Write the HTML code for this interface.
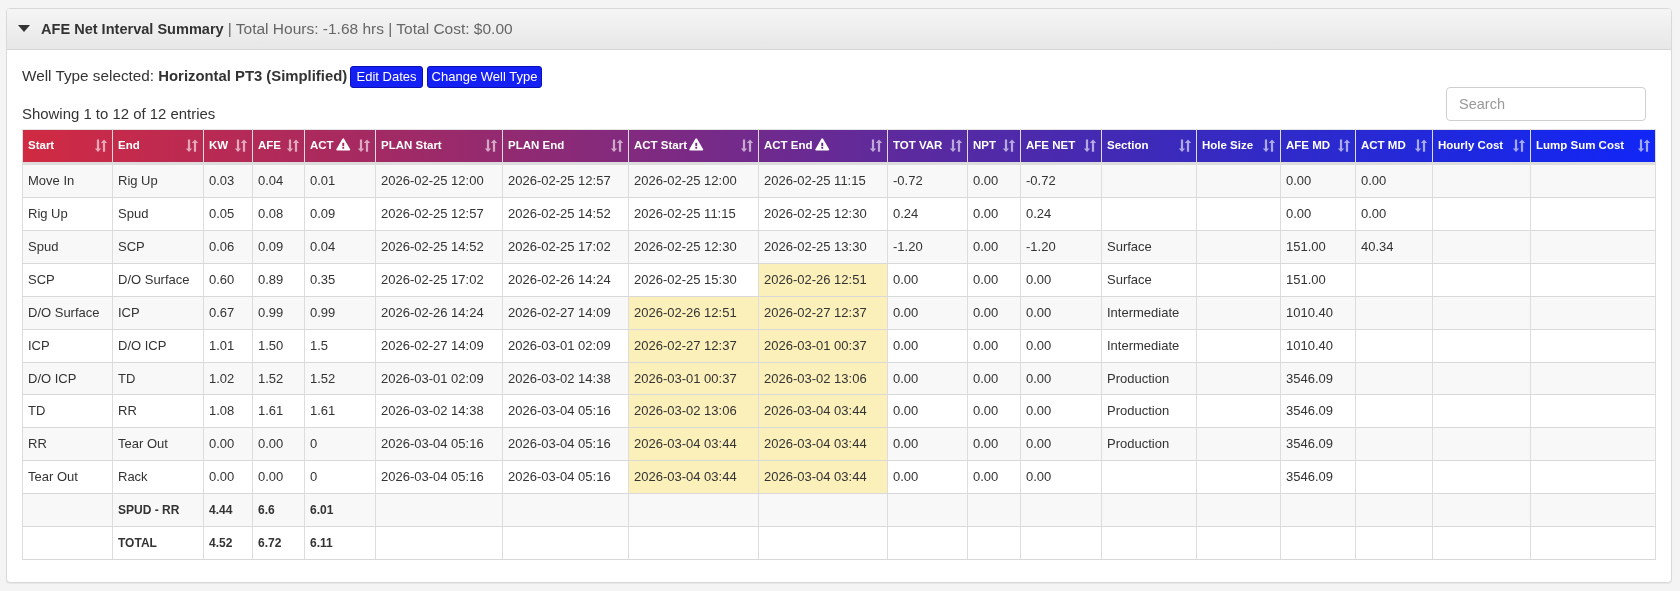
<!DOCTYPE html><html><head><meta charset="utf-8"><title>AFE Net Interval Summary</title><style>
*{box-sizing:border-box;margin:0;padding:0}
html,body{width:1680px;height:591px;overflow:hidden;background:#f4f4f4;-webkit-font-smoothing:antialiased;font-family:"Liberation Sans",sans-serif;color:#333}
.panel{will-change:transform;position:absolute;left:6px;top:8px;width:1666px;height:575px;background:#fff;border:1px solid #d9d9d9;border-radius:4px;box-shadow:0 1px 1px rgba(0,0,0,.06)}
.ph{position:absolute;left:0;top:0;width:1664px;height:41px;border-bottom:1px solid #d6d6d6;border-radius:3px 3px 0 0;background:linear-gradient(to bottom,#f5f5f5 0,#e7e7e7 100%)}
.caret{position:absolute;left:10.8px;top:16.3px;width:0;height:0;border-left:6.5px solid transparent;border-right:6.5px solid transparent;border-top:7.2px solid #333}
.title{position:absolute;left:34px;top:11px;white-space:nowrap;font-size:14.55px;line-height:18px}
.title b{color:#333}
.title span{color:#666;font-size:15.5px}
.wt{position:absolute;left:15px;top:57px;white-space:nowrap;font-size:15.3px;line-height:20px;color:#333}
.wt b{font-size:14.85px}
.btn{position:absolute;top:57px;height:22px;background:#1520f5;border:1px solid #0a10b4;border-radius:3px;color:#fff;font-size:13px;line-height:20px;text-align:center;white-space:nowrap}
.show{position:absolute;left:15px;top:94.5px;font-size:14.93px;line-height:20px;white-space:nowrap}
.search{position:absolute;left:1439px;top:78px;width:200px;height:34px;border:1px solid #cfcfcf;border-radius:4px;background:#fff}
.search span{position:absolute;left:12px;top:7px;font-size:14.5px;line-height:18px;color:#999}
.tbl{position:absolute;left:15px;top:120px;width:1634px;border-left:1px solid #ddd;border-top:1px solid #e4e4e4}
.hr{display:flex;height:35px;border-bottom:3px solid #ddd;background:linear-gradient(to right,#d12a42 0px,#cb2a47 48px,#aa2a5e 303px,#8a2a78 548px,#5c2a9e 883px,#3c2aba 1138px,#2e2acc 1283px,#1e28df 1443px,#1226f5 1618px,#1126f7 1633px)}
.th{position:relative;height:32px;border-right:1px solid #ddd;color:#fff;font-weight:bold;font-size:11.5px;line-height:30px;padding-left:5px;white-space:nowrap}
.th .si{position:absolute;right:5px;top:9px;fill:rgba(255,255,255,.6);overflow:visible}
.th .wi{vertical-align:-2px;margin-left:2px}
.r{display:flex;height:33px;border-bottom:1px solid #d9d9d9}
.r.o{background:#f8f8f8}
.r.s{height:32px}.r.s .td{height:31px;line-height:31px}
.td{height:32px;border-right:1px solid #ddd;font-size:13px;line-height:32px;padding-left:5px;white-space:nowrap;overflow:hidden}
.td.y{background:#fbf0ba}
.td.b{font-weight:bold;font-size:12px}
</style></head><body>
<div class="panel">
<div class="ph"><div class="caret"></div><div class="title"><b>AFE Net Interval Summary</b> <span>| Total Hours: -1.68 hrs | Total Cost: $0.00</span></div></div>
<div class="wt">Well Type selected: <b>Horizontal PT3 (Simplified)</b></div>
<div class="btn" style="left:343px;width:73px">Edit Dates</div>
<div class="btn" style="left:420px;width:115px">Change Well Type</div>
<div class="show">Showing 1 to 12 of 12 entries</div>
<div class="search"><span>Search</span></div>
<div class="tbl">
<div class="hr"><div class="th" style="width:90px">Start<svg class="si" width="12" height="13" viewBox="0 0 12 13"><path d="M1.9 0.6H4.1V9.5H6.2L3 13L-0.2 9.5H1.9z"/><path d="M7.9 12.8H10.1V4H12.2L9 0.5L5.8 4H7.9z"/></svg></div><div class="th" style="width:91px">End<svg class="si" width="12" height="13" viewBox="0 0 12 13"><path d="M1.9 0.6H4.1V9.5H6.2L3 13L-0.2 9.5H1.9z"/><path d="M7.9 12.8H10.1V4H12.2L9 0.5L5.8 4H7.9z"/></svg></div><div class="th" style="width:49px">KW<svg class="si" width="12" height="13" viewBox="0 0 12 13"><path d="M1.9 0.6H4.1V9.5H6.2L3 13L-0.2 9.5H1.9z"/><path d="M7.9 12.8H10.1V4H12.2L9 0.5L5.8 4H7.9z"/></svg></div><div class="th" style="width:52px">AFE<svg class="si" width="12" height="13" viewBox="0 0 12 13"><path d="M1.9 0.6H4.1V9.5H6.2L3 13L-0.2 9.5H1.9z"/><path d="M7.9 12.8H10.1V4H12.2L9 0.5L5.8 4H7.9z"/></svg></div><div class="th" style="width:71px">ACT<svg class="wi" width="15" height="13" viewBox="0 0 15 13"><path fill-rule="evenodd" fill="#fff" d="M6.3 0.9Q7.25 -0.6 8.2 0.9L14 11Q14.8 12.5 13.2 12.5L1.3 12.5Q-0.3 12.5 0.5 11Z M6.3 4.7H8.2V8H6.3z M6.3 8.7H8.2V10.7H6.3z"/></svg><svg class="si" width="12" height="13" viewBox="0 0 12 13"><path d="M1.9 0.6H4.1V9.5H6.2L3 13L-0.2 9.5H1.9z"/><path d="M7.9 12.8H10.1V4H12.2L9 0.5L5.8 4H7.9z"/></svg></div><div class="th" style="width:127px">PLAN Start<svg class="si" width="12" height="13" viewBox="0 0 12 13"><path d="M1.9 0.6H4.1V9.5H6.2L3 13L-0.2 9.5H1.9z"/><path d="M7.9 12.8H10.1V4H12.2L9 0.5L5.8 4H7.9z"/></svg></div><div class="th" style="width:126px">PLAN End<svg class="si" width="12" height="13" viewBox="0 0 12 13"><path d="M1.9 0.6H4.1V9.5H6.2L3 13L-0.2 9.5H1.9z"/><path d="M7.9 12.8H10.1V4H12.2L9 0.5L5.8 4H7.9z"/></svg></div><div class="th" style="width:130px">ACT Start<svg class="wi" width="15" height="13" viewBox="0 0 15 13"><path fill-rule="evenodd" fill="#fff" d="M6.3 0.9Q7.25 -0.6 8.2 0.9L14 11Q14.8 12.5 13.2 12.5L1.3 12.5Q-0.3 12.5 0.5 11Z M6.3 4.7H8.2V8H6.3z M6.3 8.7H8.2V10.7H6.3z"/></svg><svg class="si" width="12" height="13" viewBox="0 0 12 13"><path d="M1.9 0.6H4.1V9.5H6.2L3 13L-0.2 9.5H1.9z"/><path d="M7.9 12.8H10.1V4H12.2L9 0.5L5.8 4H7.9z"/></svg></div><div class="th" style="width:129px">ACT End<svg class="wi" width="15" height="13" viewBox="0 0 15 13"><path fill-rule="evenodd" fill="#fff" d="M6.3 0.9Q7.25 -0.6 8.2 0.9L14 11Q14.8 12.5 13.2 12.5L1.3 12.5Q-0.3 12.5 0.5 11Z M6.3 4.7H8.2V8H6.3z M6.3 8.7H8.2V10.7H6.3z"/></svg><svg class="si" width="12" height="13" viewBox="0 0 12 13"><path d="M1.9 0.6H4.1V9.5H6.2L3 13L-0.2 9.5H1.9z"/><path d="M7.9 12.8H10.1V4H12.2L9 0.5L5.8 4H7.9z"/></svg></div><div class="th" style="width:80px">TOT VAR<svg class="si" width="12" height="13" viewBox="0 0 12 13"><path d="M1.9 0.6H4.1V9.5H6.2L3 13L-0.2 9.5H1.9z"/><path d="M7.9 12.8H10.1V4H12.2L9 0.5L5.8 4H7.9z"/></svg></div><div class="th" style="width:53px">NPT<svg class="si" width="12" height="13" viewBox="0 0 12 13"><path d="M1.9 0.6H4.1V9.5H6.2L3 13L-0.2 9.5H1.9z"/><path d="M7.9 12.8H10.1V4H12.2L9 0.5L5.8 4H7.9z"/></svg></div><div class="th" style="width:81px">AFE NET<svg class="si" width="12" height="13" viewBox="0 0 12 13"><path d="M1.9 0.6H4.1V9.5H6.2L3 13L-0.2 9.5H1.9z"/><path d="M7.9 12.8H10.1V4H12.2L9 0.5L5.8 4H7.9z"/></svg></div><div class="th" style="width:95px">Section<svg class="si" width="12" height="13" viewBox="0 0 12 13"><path d="M1.9 0.6H4.1V9.5H6.2L3 13L-0.2 9.5H1.9z"/><path d="M7.9 12.8H10.1V4H12.2L9 0.5L5.8 4H7.9z"/></svg></div><div class="th" style="width:84px">Hole Size<svg class="si" width="12" height="13" viewBox="0 0 12 13"><path d="M1.9 0.6H4.1V9.5H6.2L3 13L-0.2 9.5H1.9z"/><path d="M7.9 12.8H10.1V4H12.2L9 0.5L5.8 4H7.9z"/></svg></div><div class="th" style="width:75px">AFE MD<svg class="si" width="12" height="13" viewBox="0 0 12 13"><path d="M1.9 0.6H4.1V9.5H6.2L3 13L-0.2 9.5H1.9z"/><path d="M7.9 12.8H10.1V4H12.2L9 0.5L5.8 4H7.9z"/></svg></div><div class="th" style="width:77px">ACT MD<svg class="si" width="12" height="13" viewBox="0 0 12 13"><path d="M1.9 0.6H4.1V9.5H6.2L3 13L-0.2 9.5H1.9z"/><path d="M7.9 12.8H10.1V4H12.2L9 0.5L5.8 4H7.9z"/></svg></div><div class="th" style="width:98px">Hourly Cost<svg class="si" width="12" height="13" viewBox="0 0 12 13"><path d="M1.9 0.6H4.1V9.5H6.2L3 13L-0.2 9.5H1.9z"/><path d="M7.9 12.8H10.1V4H12.2L9 0.5L5.8 4H7.9z"/></svg></div><div class="th" style="width:125px">Lump Sum Cost<svg class="si" width="12" height="13" viewBox="0 0 12 13"><path d="M1.9 0.6H4.1V9.5H6.2L3 13L-0.2 9.5H1.9z"/><path d="M7.9 12.8H10.1V4H12.2L9 0.5L5.8 4H7.9z"/></svg></div></div>
<div class="r o"><div class="td" style="width:90px">Move In</div><div class="td" style="width:91px">Rig Up</div><div class="td" style="width:49px">0.03</div><div class="td" style="width:52px">0.04</div><div class="td" style="width:71px">0.01</div><div class="td" style="width:127px">2026-02-25 12:00</div><div class="td" style="width:126px">2026-02-25 12:57</div><div class="td" style="width:130px">2026-02-25 12:00</div><div class="td" style="width:129px">2026-02-25 11:15</div><div class="td" style="width:80px">-0.72</div><div class="td" style="width:53px">0.00</div><div class="td" style="width:81px">-0.72</div><div class="td" style="width:95px"></div><div class="td" style="width:84px"></div><div class="td" style="width:75px">0.00</div><div class="td" style="width:77px">0.00</div><div class="td" style="width:98px"></div><div class="td" style="width:125px"></div></div>
<div class="r"><div class="td" style="width:90px">Rig Up</div><div class="td" style="width:91px">Spud</div><div class="td" style="width:49px">0.05</div><div class="td" style="width:52px">0.08</div><div class="td" style="width:71px">0.09</div><div class="td" style="width:127px">2026-02-25 12:57</div><div class="td" style="width:126px">2026-02-25 14:52</div><div class="td" style="width:130px">2026-02-25 11:15</div><div class="td" style="width:129px">2026-02-25 12:30</div><div class="td" style="width:80px">0.24</div><div class="td" style="width:53px">0.00</div><div class="td" style="width:81px">0.24</div><div class="td" style="width:95px"></div><div class="td" style="width:84px"></div><div class="td" style="width:75px">0.00</div><div class="td" style="width:77px">0.00</div><div class="td" style="width:98px"></div><div class="td" style="width:125px"></div></div>
<div class="r o"><div class="td" style="width:90px">Spud</div><div class="td" style="width:91px">SCP</div><div class="td" style="width:49px">0.06</div><div class="td" style="width:52px">0.09</div><div class="td" style="width:71px">0.04</div><div class="td" style="width:127px">2026-02-25 14:52</div><div class="td" style="width:126px">2026-02-25 17:02</div><div class="td" style="width:130px">2026-02-25 12:30</div><div class="td" style="width:129px">2026-02-25 13:30</div><div class="td" style="width:80px">-1.20</div><div class="td" style="width:53px">0.00</div><div class="td" style="width:81px">-1.20</div><div class="td" style="width:95px">Surface</div><div class="td" style="width:84px"></div><div class="td" style="width:75px">151.00</div><div class="td" style="width:77px">40.34</div><div class="td" style="width:98px"></div><div class="td" style="width:125px"></div></div>
<div class="r"><div class="td" style="width:90px">SCP</div><div class="td" style="width:91px">D/O Surface</div><div class="td" style="width:49px">0.60</div><div class="td" style="width:52px">0.89</div><div class="td" style="width:71px">0.35</div><div class="td" style="width:127px">2026-02-25 17:02</div><div class="td" style="width:126px">2026-02-26 14:24</div><div class="td" style="width:130px">2026-02-25 15:30</div><div class="td y" style="width:129px">2026-02-26 12:51</div><div class="td" style="width:80px">0.00</div><div class="td" style="width:53px">0.00</div><div class="td" style="width:81px">0.00</div><div class="td" style="width:95px">Surface</div><div class="td" style="width:84px"></div><div class="td" style="width:75px">151.00</div><div class="td" style="width:77px"></div><div class="td" style="width:98px"></div><div class="td" style="width:125px"></div></div>
<div class="r o"><div class="td" style="width:90px">D/O Surface</div><div class="td" style="width:91px">ICP</div><div class="td" style="width:49px">0.67</div><div class="td" style="width:52px">0.99</div><div class="td" style="width:71px">0.99</div><div class="td" style="width:127px">2026-02-26 14:24</div><div class="td" style="width:126px">2026-02-27 14:09</div><div class="td y" style="width:130px">2026-02-26 12:51</div><div class="td y" style="width:129px">2026-02-27 12:37</div><div class="td" style="width:80px">0.00</div><div class="td" style="width:53px">0.00</div><div class="td" style="width:81px">0.00</div><div class="td" style="width:95px">Intermediate</div><div class="td" style="width:84px"></div><div class="td" style="width:75px">1010.40</div><div class="td" style="width:77px"></div><div class="td" style="width:98px"></div><div class="td" style="width:125px"></div></div>
<div class="r"><div class="td" style="width:90px">ICP</div><div class="td" style="width:91px">D/O ICP</div><div class="td" style="width:49px">1.01</div><div class="td" style="width:52px">1.50</div><div class="td" style="width:71px">1.5</div><div class="td" style="width:127px">2026-02-27 14:09</div><div class="td" style="width:126px">2026-03-01 02:09</div><div class="td y" style="width:130px">2026-02-27 12:37</div><div class="td y" style="width:129px">2026-03-01 00:37</div><div class="td" style="width:80px">0.00</div><div class="td" style="width:53px">0.00</div><div class="td" style="width:81px">0.00</div><div class="td" style="width:95px">Intermediate</div><div class="td" style="width:84px"></div><div class="td" style="width:75px">1010.40</div><div class="td" style="width:77px"></div><div class="td" style="width:98px"></div><div class="td" style="width:125px"></div></div>
<div class="r o s"><div class="td" style="width:90px">D/O ICP</div><div class="td" style="width:91px">TD</div><div class="td" style="width:49px">1.02</div><div class="td" style="width:52px">1.52</div><div class="td" style="width:71px">1.52</div><div class="td" style="width:127px">2026-03-01 02:09</div><div class="td" style="width:126px">2026-03-02 14:38</div><div class="td y" style="width:130px">2026-03-01 00:37</div><div class="td y" style="width:129px">2026-03-02 13:06</div><div class="td" style="width:80px">0.00</div><div class="td" style="width:53px">0.00</div><div class="td" style="width:81px">0.00</div><div class="td" style="width:95px">Production</div><div class="td" style="width:84px"></div><div class="td" style="width:75px">3546.09</div><div class="td" style="width:77px"></div><div class="td" style="width:98px"></div><div class="td" style="width:125px"></div></div>
<div class="r"><div class="td" style="width:90px">TD</div><div class="td" style="width:91px">RR</div><div class="td" style="width:49px">1.08</div><div class="td" style="width:52px">1.61</div><div class="td" style="width:71px">1.61</div><div class="td" style="width:127px">2026-03-02 14:38</div><div class="td" style="width:126px">2026-03-04 05:16</div><div class="td y" style="width:130px">2026-03-02 13:06</div><div class="td y" style="width:129px">2026-03-04 03:44</div><div class="td" style="width:80px">0.00</div><div class="td" style="width:53px">0.00</div><div class="td" style="width:81px">0.00</div><div class="td" style="width:95px">Production</div><div class="td" style="width:84px"></div><div class="td" style="width:75px">3546.09</div><div class="td" style="width:77px"></div><div class="td" style="width:98px"></div><div class="td" style="width:125px"></div></div>
<div class="r o"><div class="td" style="width:90px">RR</div><div class="td" style="width:91px">Tear Out</div><div class="td" style="width:49px">0.00</div><div class="td" style="width:52px">0.00</div><div class="td" style="width:71px">0</div><div class="td" style="width:127px">2026-03-04 05:16</div><div class="td" style="width:126px">2026-03-04 05:16</div><div class="td y" style="width:130px">2026-03-04 03:44</div><div class="td y" style="width:129px">2026-03-04 03:44</div><div class="td" style="width:80px">0.00</div><div class="td" style="width:53px">0.00</div><div class="td" style="width:81px">0.00</div><div class="td" style="width:95px">Production</div><div class="td" style="width:84px"></div><div class="td" style="width:75px">3546.09</div><div class="td" style="width:77px"></div><div class="td" style="width:98px"></div><div class="td" style="width:125px"></div></div>
<div class="r"><div class="td" style="width:90px">Tear Out</div><div class="td" style="width:91px">Rack</div><div class="td" style="width:49px">0.00</div><div class="td" style="width:52px">0.00</div><div class="td" style="width:71px">0</div><div class="td" style="width:127px">2026-03-04 05:16</div><div class="td" style="width:126px">2026-03-04 05:16</div><div class="td y" style="width:130px">2026-03-04 03:44</div><div class="td y" style="width:129px">2026-03-04 03:44</div><div class="td" style="width:80px">0.00</div><div class="td" style="width:53px">0.00</div><div class="td" style="width:81px">0.00</div><div class="td" style="width:95px"></div><div class="td" style="width:84px"></div><div class="td" style="width:75px">3546.09</div><div class="td" style="width:77px"></div><div class="td" style="width:98px"></div><div class="td" style="width:125px"></div></div>
<div class="r o"><div class="td" style="width:90px"></div><div class="td b" style="width:91px">SPUD - RR</div><div class="td b" style="width:49px">4.44</div><div class="td b" style="width:52px">6.6</div><div class="td b" style="width:71px">6.01</div><div class="td" style="width:127px"></div><div class="td" style="width:126px"></div><div class="td" style="width:130px"></div><div class="td" style="width:129px"></div><div class="td" style="width:80px"></div><div class="td" style="width:53px"></div><div class="td" style="width:81px"></div><div class="td" style="width:95px"></div><div class="td" style="width:84px"></div><div class="td" style="width:75px"></div><div class="td" style="width:77px"></div><div class="td" style="width:98px"></div><div class="td" style="width:125px"></div></div>
<div class="r"><div class="td" style="width:90px"></div><div class="td b" style="width:91px">TOTAL</div><div class="td b" style="width:49px">4.52</div><div class="td b" style="width:52px">6.72</div><div class="td b" style="width:71px">6.11</div><div class="td" style="width:127px"></div><div class="td" style="width:126px"></div><div class="td" style="width:130px"></div><div class="td" style="width:129px"></div><div class="td" style="width:80px"></div><div class="td" style="width:53px"></div><div class="td" style="width:81px"></div><div class="td" style="width:95px"></div><div class="td" style="width:84px"></div><div class="td" style="width:75px"></div><div class="td" style="width:77px"></div><div class="td" style="width:98px"></div><div class="td" style="width:125px"></div></div>
</div></div></body></html>
